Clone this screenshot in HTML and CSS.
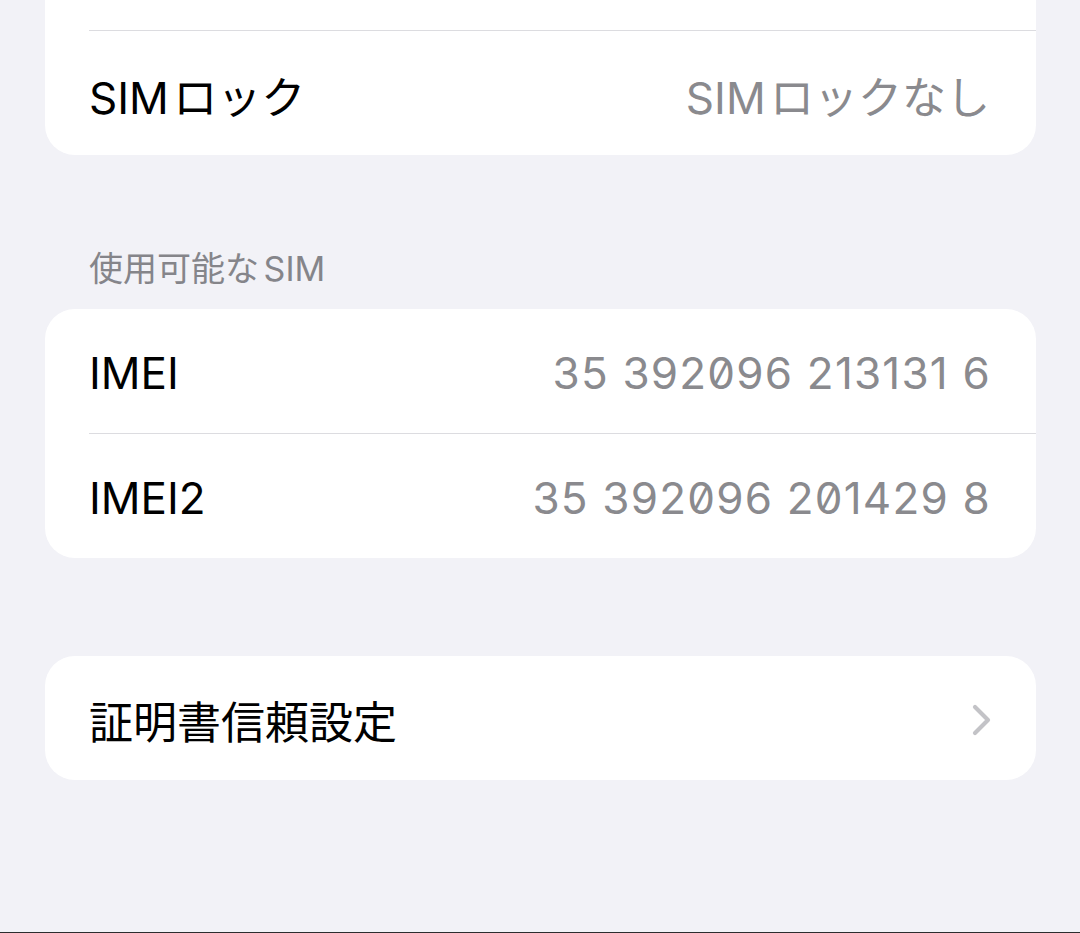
FILE: index.html
```html
<!DOCTYPE html>
<html lang="ja">
<head>
<meta charset="utf-8">
<title>情報</title>
<link rel="stylesheet" href="styles.css">
</head>
<body>
<div class="screen">
  <section class="card card-top">
    <div class="row row-cut"><div class="row-inner"></div></div>
    <div class="row"><div class="row-inner last"><span class="label">SIM ロック</span><span class="value">SIM ロックなし</span></div></div>
  </section>

  <h2 class="section-header">使用可能な SIM</h2>
  <section class="card">
    <div class="row"><div class="row-inner"><span class="label">IMEI</span><span class="value num">35 392096 213131 6</span></div></div>
    <div class="row"><div class="row-inner last"><span class="label">IMEI2</span><span class="value num">35 392096 201429 8</span></div></div>
  </section>

  <section class="card card-gap">
    <div class="row"><div class="row-inner last"><span class="label">証明書信頼設定</span>
      <svg class="chevron" width="22" height="34" viewBox="0 0 22 34"><path d="M4 4 L17 17 L4 30" fill="none" stroke="#c3c3c7" stroke-width="4.2" stroke-linecap="round" stroke-linejoin="round"/></svg>
    </div></div>
  </section>
</div>
</body>
</html>
```

FILE: styles.css
```css
* { box-sizing: border-box; }
html, body { margin: 0; padding: 0; }
body {
  background: #f2f2f7;
  font-family: "Inter", "Noto Sans CJK JP", sans-serif;
  -webkit-font-smoothing: antialiased;
}
.screen {
  width: 1080px;
  height: 933px;
  overflow: hidden;
  background: #f2f2f7;
  border-bottom: 1px solid #2c2c2e;
  padding: 0 44px 0 45px;
  display: flex;
  flex-direction: column;
}
.card {
  background: #ffffff;
  border-radius: 30px;
  overflow: hidden;
  flex: none;
}
.card-top {
  border-radius: 0 0 30px 30px;
}
.row {
  padding-left: 44px;
}
.row-inner {
  height: 125px;
  display: flex;
  align-items: center;
  justify-content: space-between;
  padding: 3px 46px 0 0;
  border-bottom: 1px solid #dcdce0;
}
.row-inner.last {
  border-bottom: none;
  height: 124px;
}
.row-cut .row-inner {
  height: 31px;
}
.label {
  font-size: 44px;
  color: #000000;
  word-spacing: -8px;
}
.value {
  font-size: 44px;
  color: #8a8a8e;
  word-spacing: -8px;
}
.num {
  font-feature-settings: "zero" 1;
  word-spacing: 0;
  letter-spacing: 1.2px;
  margin-right: -1px;
}
.section-header {
  margin: 0;
  padding: 94px 0 0 44px;
  height: 154px;
  flex: none;
  font-size: 34px;
  font-weight: 400;
  color: #85858a;
  line-height: 40px;
  word-spacing: -5px;
}
.card-gap {
  margin-top: 98px;
}
.chevron {
  margin-right: -3px;
}
```
